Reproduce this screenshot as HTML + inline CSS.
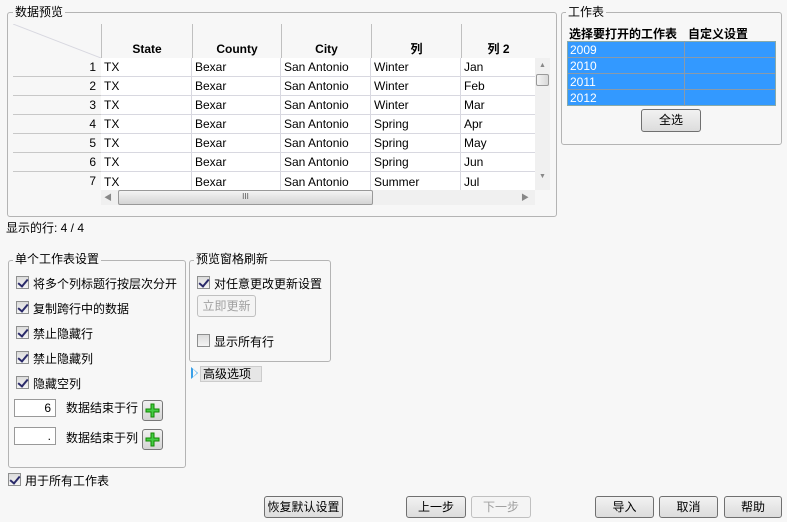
<!DOCTYPE html>
<html><head><meta charset="utf-8"><style>
*{box-sizing:border-box;margin:0;padding:0}
body{width:787px;height:522px;background:#f7f7f7;font-family:"Liberation Sans","Noto Sans CJK SC",sans-serif;font-size:12px;color:#000;position:relative;overflow:hidden}
.a{position:absolute}
.fs{position:absolute;border:1px solid #b4b4b4;border-radius:3px}
.lg{position:absolute;background:#f7f7f7;padding:0 2px;font-size:12px;line-height:14px}
.cell{position:absolute;height:19px;line-height:19px;border-right:1px solid #d8d8e0;border-bottom:1px solid #d8d8e0;background:#fff;padding-left:3px;white-space:nowrap;overflow:hidden}
.rh{position:absolute;height:19px;line-height:19px;border-bottom:1px solid #c8c8c8;text-align:right;padding-right:5px;background:#f7f7f7}
.hd{position:absolute;top:24px;height:34px;border-left:1px solid #c0c0c0;font-weight:bold;text-align:center;line-height:14px;padding-top:18px}
.cb{position:absolute;width:13px;height:13px;border:1px solid #8e8f8f;background:linear-gradient(#dcdcdc,#f4f4f4)}
.cb.on::after{content:"";position:absolute;left:3px;top:0px;width:4px;height:8px;border:solid #2a2a6a;border-width:0 2px 2px 0;transform:rotate(40deg)}
.btn{position:absolute;border:1px solid #707070;border-radius:3px;background:linear-gradient(#f2f2f2,#dcdcdc);text-align:center;line-height:20px;height:22px}
.dis{color:#a0a0a0;border-color:#c0c0c0;background:#f4f4f4}
.inp{position:absolute;border:1px solid #999;background:#fff;text-align:right;padding-right:4px;line-height:16px;height:18px}
.plus{position:absolute;width:21px;height:21px;border:1px solid #777;border-radius:3px;background:linear-gradient(#f0f0f0,#d4d4d4)}
</style></head><body>

<div class="fs" style="left:7px;top:12px;width:550px;height:205px"></div>
<div class="lg" style="left:13px;top:5px">数据预览</div>
<svg class="a" style="left:13px;top:24px" width="88" height="34"><line x1="0" y1="0" x2="88" y2="34" stroke="#d8d8e0"/></svg>
<div class="hd" style="left:101px;width:91px">State</div>
<div class="hd" style="left:192px;width:89px">County</div>
<div class="hd" style="left:281px;width:90px">City</div>
<div class="hd" style="left:371px;width:90px">列</div>
<div class="hd" style="left:461px;width:74px;overflow:hidden">列 2</div>
<div class="a" style="left:13px;top:58px;width:522px;height:1px;background:#c0c0c0"></div>

<div id="rows"></div>
<script></script>
<div class="rh" style="left:13px;top:58px;width:88px">1</div>
<div class="rh" style="left:13px;top:77px;width:88px">2</div>
<div class="rh" style="left:13px;top:96px;width:88px">3</div>
<div class="rh" style="left:13px;top:115px;width:88px">4</div>
<div class="rh" style="left:13px;top:134px;width:88px">5</div>
<div class="rh" style="left:13px;top:153px;width:88px">6</div>
<div class="rh" style="left:13px;top:172px;width:88px;height:18px;border:0">7</div>

<div class="cell" style="left:101px;top:58px;width:91px">TX</div><div class="cell" style="left:192px;top:58px;width:89px">Bexar</div><div class="cell" style="left:281px;top:58px;width:90px">San Antonio</div><div class="cell" style="left:371px;top:58px;width:90px">Winter</div><div class="cell" style="left:461px;top:58px;width:74px;border-right:0">Jan</div>
<div class="cell" style="left:101px;top:77px;width:91px">TX</div><div class="cell" style="left:192px;top:77px;width:89px">Bexar</div><div class="cell" style="left:281px;top:77px;width:90px">San Antonio</div><div class="cell" style="left:371px;top:77px;width:90px">Winter</div><div class="cell" style="left:461px;top:77px;width:74px;border-right:0">Feb</div>
<div class="cell" style="left:101px;top:96px;width:91px">TX</div><div class="cell" style="left:192px;top:96px;width:89px">Bexar</div><div class="cell" style="left:281px;top:96px;width:90px">San Antonio</div><div class="cell" style="left:371px;top:96px;width:90px">Winter</div><div class="cell" style="left:461px;top:96px;width:74px;border-right:0">Mar</div>
<div class="cell" style="left:101px;top:115px;width:91px">TX</div><div class="cell" style="left:192px;top:115px;width:89px">Bexar</div><div class="cell" style="left:281px;top:115px;width:90px">San Antonio</div><div class="cell" style="left:371px;top:115px;width:90px">Spring</div><div class="cell" style="left:461px;top:115px;width:74px;border-right:0">Apr</div>
<div class="cell" style="left:101px;top:134px;width:91px">TX</div><div class="cell" style="left:192px;top:134px;width:89px">Bexar</div><div class="cell" style="left:281px;top:134px;width:90px">San Antonio</div><div class="cell" style="left:371px;top:134px;width:90px">Spring</div><div class="cell" style="left:461px;top:134px;width:74px;border-right:0">May</div>
<div class="cell" style="left:101px;top:153px;width:91px">TX</div><div class="cell" style="left:192px;top:153px;width:89px">Bexar</div><div class="cell" style="left:281px;top:153px;width:90px">San Antonio</div><div class="cell" style="left:371px;top:153px;width:90px">Spring</div><div class="cell" style="left:461px;top:153px;width:74px;border-right:0">Jun</div>
<div class="cell" style="left:101px;top:172px;width:91px;height:18px;line-height:20px;border-bottom:0">TX</div><div class="cell" style="left:192px;top:172px;width:89px;height:18px;line-height:20px;border-bottom:0">Bexar</div><div class="cell" style="left:281px;top:172px;width:90px;height:18px;line-height:20px;border-bottom:0">San Antonio</div><div class="cell" style="left:371px;top:172px;width:90px;height:18px;line-height:20px;border-bottom:0">Summer</div><div class="cell" style="left:461px;top:172px;width:74px;height:18px;line-height:20px;border:0">Jul</div>

<!-- vertical scrollbar -->
<div class="a" style="left:535px;top:58px;width:15px;height:132px;background:#f0f0f0"></div>
<div class="a" style="left:539px;top:62px;font-size:7px;color:#888">▲</div>
<div class="a" style="left:536px;top:74px;width:13px;height:12px;border:1px solid #999;border-radius:2px;background:linear-gradient(90deg,#f4f4f4,#d8d8d8)"></div>
<div class="a" style="left:539px;top:173px;font-size:7px;color:#888">▼</div>
<!-- horizontal scrollbar -->
<div class="a" style="left:101px;top:190px;width:434px;height:15px;background:#f0f0f0"></div>
<div class="a" style="left:104px;top:192px;font-size:8px;color:#888">◀</div>
<div class="a" style="left:118px;top:190px;width:255px;height:15px;border:1px solid #999;border-radius:2px;background:linear-gradient(#f4f4f4,#d4d4d4);text-align:center;font-size:8px;line-height:12px;color:#555">III</div>
<div class="a" style="left:521px;top:192px;font-size:8px;color:#888">▶</div>

<div class="a" style="left:6px;top:219px">显示的行: 4 / 4</div>

<!-- worksheet -->
<div class="fs" style="left:561px;top:12px;width:221px;height:133px"></div>
<div class="lg" style="left:566px;top:5px">工作表</div>
<div class="a" style="left:569px;top:25px;font-weight:bold">选择要打开的工作表</div>
<div class="a" style="left:688px;top:25px;font-weight:bold">自定义设置</div>
<div class="a" style="left:567px;top:41px;width:209px;height:65px;background:#3399ff;border:1px solid #8aa"></div>
<div class="a" style="left:684px;top:41px;width:1px;height:65px;background:#8a9aaa"></div>
<div class="a" style="left:568px;top:57px;width:207px;height:1px;background:#8a9aaa"></div>
<div class="a" style="left:568px;top:73px;width:207px;height:1px;background:#8a9aaa"></div>
<div class="a" style="left:568px;top:89px;width:207px;height:1px;background:#8a9aaa"></div>
<div class="a" style="left:570px;top:42px;color:#fff;line-height:16px">2009<br>2010<br>2011<br>2012</div>
<div class="btn" style="left:641px;top:109px;width:60px;height:23px">全选</div>

<!-- single sheet -->
<div class="fs" style="left:8px;top:260px;width:178px;height:208px"></div>
<div class="lg" style="left:13px;top:252px">单个工作表设置</div>
<div class="cb on" style="left:16px;top:276px"></div><div class="a" style="left:33px;top:275px">将多个列标题行按层次分开</div>
<div class="cb on" style="left:16px;top:301px"></div><div class="a" style="left:33px;top:300px">复制跨行中的数据</div>
<div class="cb on" style="left:16px;top:326px"></div><div class="a" style="left:33px;top:325px">禁止隐藏行</div>
<div class="cb on" style="left:16px;top:351px"></div><div class="a" style="left:33px;top:350px">禁止隐藏列</div>
<div class="cb on" style="left:16px;top:376px"></div><div class="a" style="left:33px;top:375px">隐藏空列</div>
<div class="inp" style="left:14px;top:399px;width:42px">6</div><div class="a" style="left:66px;top:399px">数据结束于行</div>
<div class="plus" style="left:142px;top:400px"><svg width="19" height="19"><path d="M8 3h3v5h5v3h-5v5h-3v-5h-5v-3h5z" fill="#4c4" stroke="#180" stroke-width="1"/></svg></div>
<div class="inp" style="left:14px;top:427px;width:42px">.</div><div class="a" style="left:66px;top:429px">数据结束于列</div>
<div class="plus" style="left:142px;top:429px"><svg width="19" height="19"><path d="M8 3h3v5h5v3h-5v5h-3v-5h-5v-3h5z" fill="#4c4" stroke="#180" stroke-width="1"/></svg></div>

<!-- preview refresh -->
<div class="fs" style="left:189px;top:260px;width:142px;height:102px"></div>
<div class="lg" style="left:194px;top:252px">预览窗格刷新</div>
<div class="cb on" style="left:197px;top:276px"></div><div class="a" style="left:214px;top:275px">对任意更改更新设置</div>
<div class="btn dis" style="left:197px;top:295px;width:59px;height:22px">立即更新</div>
<div class="cb" style="left:197px;top:334px"></div><div class="a" style="left:214px;top:333px">显示所有行</div>

<div class="a" style="left:191px;top:367px;width:0;height:0;border-left:7px solid #3aa0e8;border-top:6px solid transparent;border-bottom:6px solid transparent"></div>
<div class="a" style="left:193px;top:369px;width:0;height:0;border-left:4px solid #f7f7f7;border-top:4px solid transparent;border-bottom:4px solid transparent"></div>
<div class="a" style="left:200px;top:366px;width:62px;height:16px;background:#e6e6e6;border:1px solid #ccc;padding-left:2px;line-height:14px">高级选项</div>

<div class="cb on" style="left:8px;top:473px"></div><div class="a" style="left:25px;top:472px">用于所有工作表</div>

<div class="btn" style="left:264px;top:496px;width:79px">恢复默认设置</div>
<div class="btn" style="left:406px;top:496px;width:60px">上一步</div>
<div class="btn dis" style="left:471px;top:496px;width:60px">下一步</div>
<div class="btn" style="left:595px;top:496px;width:59px">导入</div>
<div class="btn" style="left:659px;top:496px;width:59px">取消</div>
<div class="btn" style="left:724px;top:496px;width:58px">帮助</div>
</body></html>
